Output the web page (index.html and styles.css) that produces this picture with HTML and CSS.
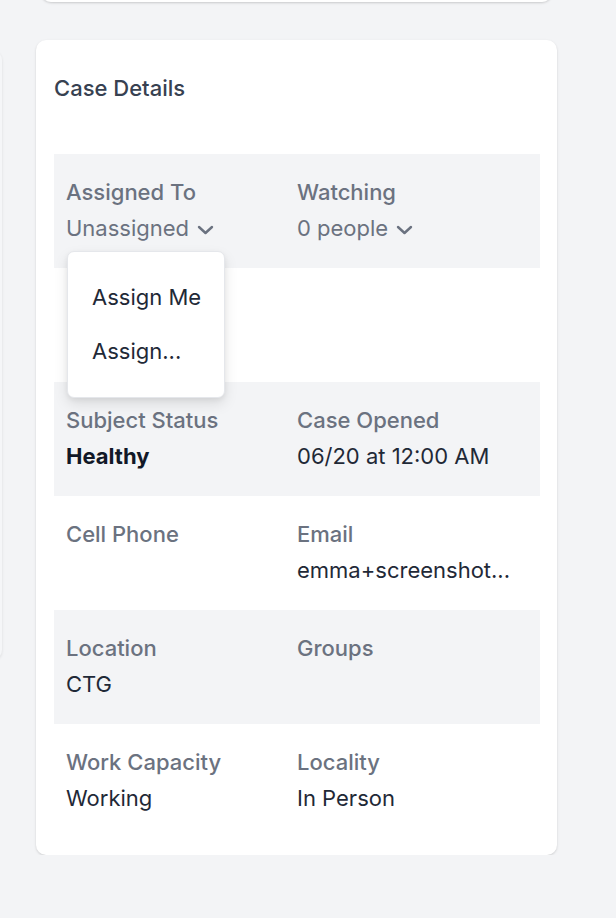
FILE: index.html
```html
<!DOCTYPE html>
<html lang="en">
<head>
    <meta charset="UTF-8">
    <meta name="viewport" content="width=device-width, initial-scale=1.0">
    <title>Case Details</title>
    <link rel="stylesheet" href="styles.css">
</head>
<body>
    <div class="page">
        <aside class="side"></aside>

        <main class="main">
            <div class="top-card"></div>

            <section class="card">
                <h3 class="card-title">Case Details</h3>

                <div class="row">
                    <div class="field">
                        <div class="label">Assigned To</div>
                        <div class="value muted">Unassigned<svg class="chevron" width="17" height="10" viewBox="0 0 17 10"><path d="M2 2 L8.5 8 L15 2" fill="none" stroke="currentColor" stroke-width="2.4" stroke-linecap="round" stroke-linejoin="round"/></svg></div>
                        <ul class="menu">
                            <li>Assign Me</li>
                            <li>Assign...</li>
                        </ul>
                    </div>
                    <div class="field">
                        <div class="label">Watching</div>
                        <div class="value muted">0 people<svg class="chevron" width="17" height="10" viewBox="0 0 17 10"><path d="M2 2 L8.5 8 L15 2" fill="none" stroke="currentColor" stroke-width="2.4" stroke-linecap="round" stroke-linejoin="round"/></svg></div>
                    </div>
                </div>

                <div class="row">
                    <div class="field"></div>
                    <div class="field"></div>
                </div>

                <div class="row">
                    <div class="field">
                        <div class="label">Subject Status</div>
                        <div class="value strong">Healthy</div>
                    </div>
                    <div class="field">
                        <div class="label">Case Opened</div>
                        <div class="value">06/20 at 12:00 AM</div>
                    </div>
                </div>

                <div class="row">
                    <div class="field">
                        <div class="label">Cell Phone</div>
                    </div>
                    <div class="field">
                        <div class="label">Email</div>
                        <div class="value">emma+screenshot...</div>
                    </div>
                </div>

                <div class="row">
                    <div class="field">
                        <div class="label">Location</div>
                        <div class="value">CTG</div>
                    </div>
                    <div class="field">
                        <div class="label">Groups</div>
                    </div>
                </div>

                <div class="row">
                    <div class="field">
                        <div class="label">Work Capacity</div>
                        <div class="value">Working</div>
                    </div>
                    <div class="field">
                        <div class="label">Locality</div>
                        <div class="value">In Person</div>
                    </div>
                </div>
            </section>
        </main>
    </div>
</body>
</html>
```

FILE: styles.css
```css
html, body {
    margin: 0;
    background: #f3f4f6;
    font-family: Inter, "Noto Sans", "Liberation Sans", sans-serif;
    color: #374151;
}

.page {
    display: flex;
    align-items: flex-start;
    gap: 34px;
    margin-left: -298px;
}

/* left column, only its edge shows */
.side {
    flex: none;
    width: 300px;
    height: 610px;
    margin-top: 50px;
    background: #f5f6f8;
    border-radius: 10px;
    box-shadow: 0 1px 3px rgba(0, 0, 0, 0.1);
}

.main {
    flex: none;
    width: 521px;
}

/* card above, scrolled out of view */
.top-card {
    height: 40px;
    margin: -38px 5px 0 5px;
    background: #fff;
    border-radius: 10px;
    box-shadow: 0 1px 3px rgba(0, 0, 0, 0.12), 0 1px 2px rgba(0, 0, 0, 0.06);
}

.card {
    margin-top: 38px;
    padding: 0 17px 17px 18px;
    background: #fff;
    border-radius: 10px;
    box-shadow: 0 1px 3px rgba(0, 0, 0, 0.1), 0 1px 2px rgba(0, 0, 0, 0.06);
}

.card-title {
    margin: 0;
    height: 114px;
    box-sizing: border-box;
    padding-top: 36px;
    font-size: 22px;
    line-height: 24px;
    font-weight: 500;
    color: #374151;
}

.row {
    display: grid;
    grid-template-columns: 1fr 1fr;
    height: 114px;
    box-sizing: border-box;
    padding: 24px 12px 0;
}

.row:nth-of-type(odd) {background: #f3f4f6;}

.field {
    position: relative;
    min-width: 0;
}

.label {
    font-size: 22px;
    line-height: 28px;
    font-weight: 500;
    color: #6b7280;
}

.value {
    margin-top: 8px;
    font-size: 22px;
    line-height: 28px;
    color: #1f2937;
}

.value.muted {color: #6b7280;}
.value.strong {font-weight: 700; color: #111827;}

.chevron {
    margin-left: 8px;
    vertical-align: 1px;
}

/* open dropdown under Assigned To */
.menu {
    position: absolute;
    left: 1px;
    top: 73px;
    z-index: 2;
    width: 158px;
    box-sizing: border-box;
    margin: 0;
    padding: 18px 0 19px;
    list-style: none;
    background: #fff;
    border: 1px solid #e5e7eb;
    border-radius: 7px;
    box-shadow: 0 6px 14px rgba(0, 0, 0, 0.1), 0 2px 5px rgba(0, 0, 0, 0.06);
}

.menu li {
    padding: 12px 0 12px 24px;
    font-size: 22px;
    line-height: 30px;
    color: #1f2937;
}
```
